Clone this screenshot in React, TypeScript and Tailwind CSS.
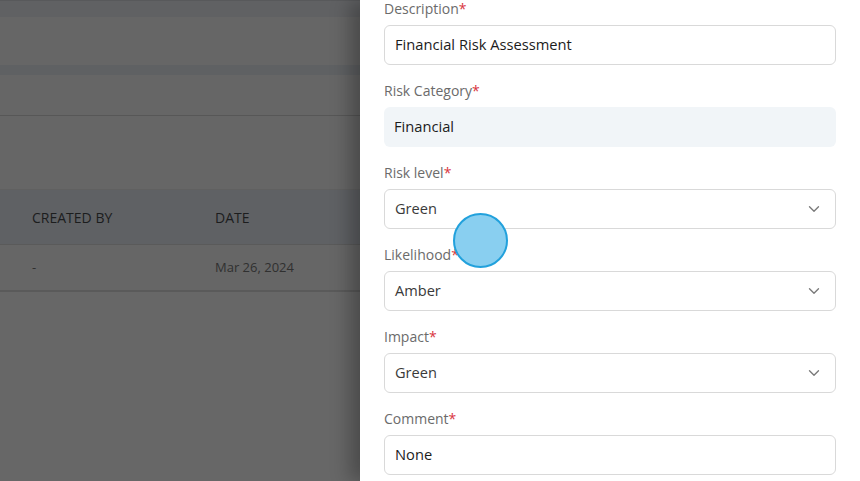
import { ChevronDown } from 'lucide-react';

const fieldLabel = 'block text-[14px] leading-[18px] text-[#6b6b6b] mb-[7px]';

function Label({ text }: { text: string }) {
  return (
    <label className={fieldLabel}>
      {text}
      <span className="text-[#d9363e]">*</span>
    </label>
  );
}

function SelectBox({ value }: { value: string }) {
  return (
    <div className="flex items-center justify-between h-[40px] pl-[10px] pr-[11px] pb-[2px] border border-[#d9d9d9] rounded-[6px] bg-white">
      <span className="text-[14.6px] leading-[20px] text-[#3a3a3a]">{value}</span>
      <ChevronDown size={18} strokeWidth={1.8} className="text-[#7a7a7a] mr-[1px] mt-[2px]" />
    </div>
  );
}

function TextBox({ value, filled }: { value: string; filled?: boolean }) {
  return (
    <div
      className={`flex items-center h-[40px] px-[10px] pb-[2px] rounded-[6px] text-[14.7px] leading-[20px] text-[#1c1c1c] ${
        filled ? 'bg-[#f1f5f8]' : 'border border-[#d9d9d9]'
      }`}
    >
      {value}
    </div>
  );
}

export default function App() {
  return (
    <div
      className="relative flex w-[860px] h-[481px] overflow-hidden bg-[#676767]"
      style={{ fontFamily: '"Open Sans", "Noto Sans", sans-serif' }}
    >
      {/* dimmed page behind the drawer */}
      <div className="w-[360px] shrink-0 flex flex-col">
        <div className="h-[1px] bg-[#58595b]" />
        <div className="h-[16px] bg-[#606163]" />
        <div className="h-[48px] bg-[#666666]" />
        <div className="h-[10px] bg-[#5f6163]" />
        <div className="h-[41px] bg-[#666666] border-b border-[#575757]" />
        <div className="h-[74px] bg-[#666666] border-b border-[#606060]" />
        <div className="h-[55px] bg-[#5f6164] border-b border-[#5a5a5a] flex items-center text-[14px] font-medium text-[#1c1d1e]">
          <span className="w-[215px] pl-[32px]">CREATED BY</span>
          <span>DATE</span>
        </div>
        <div className="h-[47px] bg-[#666666] border-b-2 border-[#5a5a5a] flex items-center text-[13px] text-[#303030]">
          <span className="w-[215px] pl-[32px]">-</span>
          <span>Mar 26, 2024</span>
        </div>
        <div className="flex-1 bg-[#676767]" />
      </div>

      {/* drawer */}
      <div className="relative flex-1 bg-white px-[24px] shadow-[-10px_0_18px_rgba(0,0,0,0.28)]">
        <div className="flex flex-col gap-[17px]">
          <div>
            <Label text="Description" />
            <TextBox value="Financial Risk Assessment" />
          </div>
          <div>
            <Label text="Risk Category" />
            <TextBox value="Financial" filled />
          </div>
          <div>
            <Label text="Risk level" />
            <SelectBox value="Green" />
          </div>
          <div>
            <Label text="Likelihood" />
            <SelectBox value="Amber" />
          </div>
          <div>
            <Label text="Impact" />
            <SelectBox value="Green" />
          </div>
          <div>
            <Label text="Comment" />
            <TextBox value="None" />
          </div>
        </div>
      </div>

      {/* click highlight */}
      <div className="absolute left-[453px] top-[213px] w-[55px] h-[55px] rounded-full bg-[#89cff0] border-[2.5px] border-[#22a1dc]" />
    </div>
  );
}
